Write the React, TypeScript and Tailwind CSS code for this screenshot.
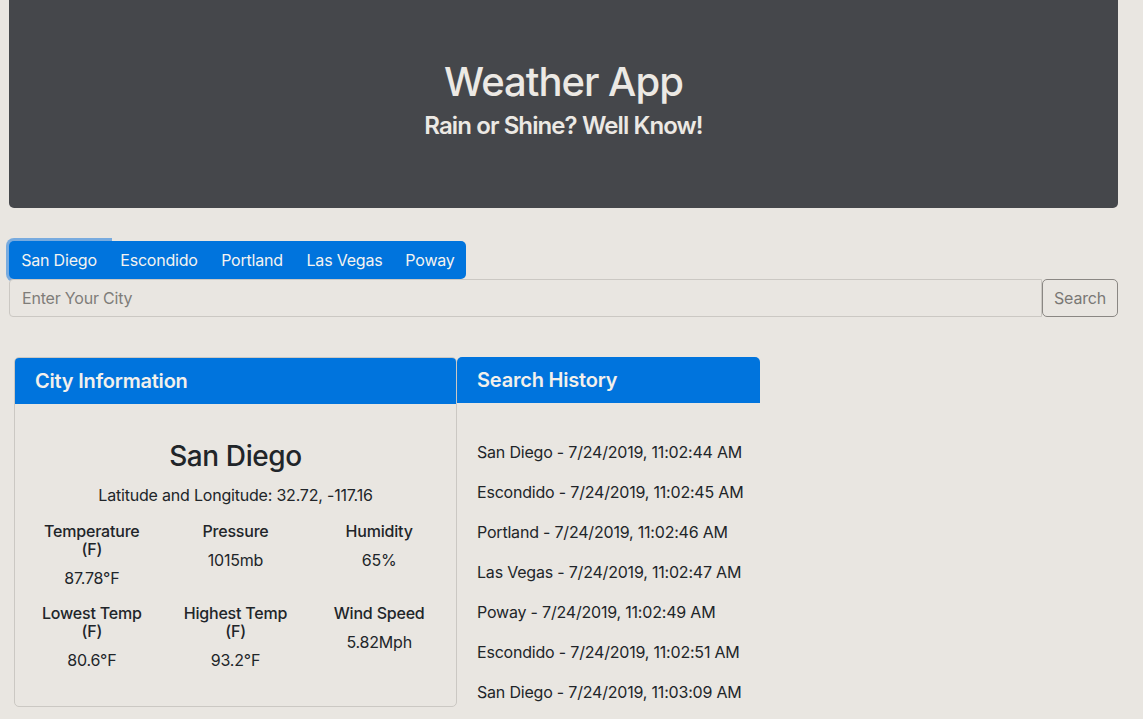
import React from 'react';

const cities = [
  { name: 'San Diego', w: 'w-[100px]' },
  { name: 'Escondido', w: 'w-[100px]' },
  { name: 'Portland', w: 'w-[86px]' },
  { name: 'Las Vegas', w: 'w-[99px]' },
  { name: 'Poway', w: 'w-[72px]' },
];

const history = [
  'San Diego - 7/24/2019, 11:02:44 AM',
  'Escondido - 7/24/2019, 11:02:45 AM',
  'Portland - 7/24/2019, 11:02:46 AM',
  'Las Vegas - 7/24/2019, 11:02:47 AM',
  'Poway - 7/24/2019, 11:02:49 AM',
  'Escondido - 7/24/2019, 11:02:51 AM',
  'San Diego - 7/24/2019, 11:03:09 AM',
];

const stats = [
  { label: ['Temperature', '(F)'], value: '87.78°F' },
  { label: ['Pressure'], value: '1015mb' },
  { label: ['Humidity'], value: '65%' },
  { label: ['Lowest Temp', '(F)'], value: '80.6°F' },
  { label: ['Highest Temp', '(F)'], value: '93.2°F' },
  { label: ['Wind Speed'], value: '5.82Mph' },
];

const Stat = ({ label, value }: { label: string[]; value: string }) => (
  <div className="px-[10px] text-center">
    <h6 className="text-[16px] font-medium leading-[18px] mb-2">
      {label.map((line) => (
        <span key={line} className="block whitespace-nowrap">{line}</span>
      ))}
    </h6>
    <p className="text-[16px] leading-6">{value}</p>
  </div>
);

export default function App() {
  return (
    <div className="min-h-screen bg-[#e9e6e1] text-[#212529] font-['Inter',sans-serif] tracking-[-0.2px] pb-10">
      <div className="ml-[9px] w-[1109px]">
        {/* jumbotron */}
        <div className="h-[208px] bg-[#45474b] rounded-b-[5px] pt-[58px] text-center text-[#ece9e4]">
          <h1 className="text-[40px] font-medium leading-[48px] tracking-[-1px]">Weather App</h1>
          <h2 className="text-[24px] font-semibold leading-[29px] mt-[5px] tracking-[-0.9px]">Rain or Shine? Well Know!</h2>
        </div>

        {/* city tabs */}
        <div className="mt-[33px] flex h-[38px]">
          {cities.map((c, i) => (
            <button
              key={c.name}
              className={`${c.w} h-[38px] bg-[#0074dd] text-center whitespace-nowrap text-[16px] leading-[38px] text-[#f4f3f0] ${
                i === 0 ? 'rounded-l-[5px] shadow-[0_0_0_3px_rgba(100,160,222,0.85)]' : ''
              } ${i === cities.length - 1 ? 'rounded-r-[5px]' : ''}`}
            >
              {c.name}
            </button>
          ))}
        </div>

        {/* search */}
        <div className="flex h-[38px]">
          <input
            className="flex-1 h-[38px] bg-[#e9e6e1] border border-[#cbc8c3] rounded-l-[4px] px-3 text-[16px] text-[#212529] placeholder:text-[#7f7d79] outline-none"
            placeholder="Enter Your City"
          />
          <button className="w-[76px] h-[38px] bg-[#e9e6e1] border border-[#8a8783] rounded-[5px] text-[16px] text-[#7a7875]">
            Search
          </button>
        </div>

        {/* cards */}
        <div className="mt-[40px] ml-[5px] flex items-start">
          <div className="w-[443px] border border-[#cbc8c3] rounded-[5px] overflow-hidden">
            <div className="h-[46px] bg-[#0074dd] px-5 flex items-center text-[20px] font-semibold text-[#f2f0ec]">
              City Information
            </div>
            <div className="pt-[35px] pb-[34px] px-[5px] text-center">
              <h2 className="text-[28px] font-medium leading-[34px] mb-[10px] tracking-[-0.4px]">San Diego</h2>
              <p className="text-[16px] leading-6 mb-[15px]">Latitude and Longitude: 32.72, -117.16</p>
              <div className="grid grid-cols-3 gap-y-[14px]">
                {stats.map((s) => (
                  <Stat key={s.value} label={s.label} value={s.value} />
                ))}
              </div>
            </div>
          </div>

          <div className="w-[303px]">
            <div className="h-[46px] bg-[#0074dd] rounded-t-[5px] px-5 flex items-center text-[20px] font-semibold text-[#f2f0ec]">
              Search History
            </div>
            <div className="pt-[37px] px-5">
              {history.map((h, i) => (
                <p key={i} className="text-[16px] leading-6 mb-4 whitespace-nowrap">{h}</p>
              ))}
            </div>
          </div>
        </div>
      </div>
    </div>
  );
}
